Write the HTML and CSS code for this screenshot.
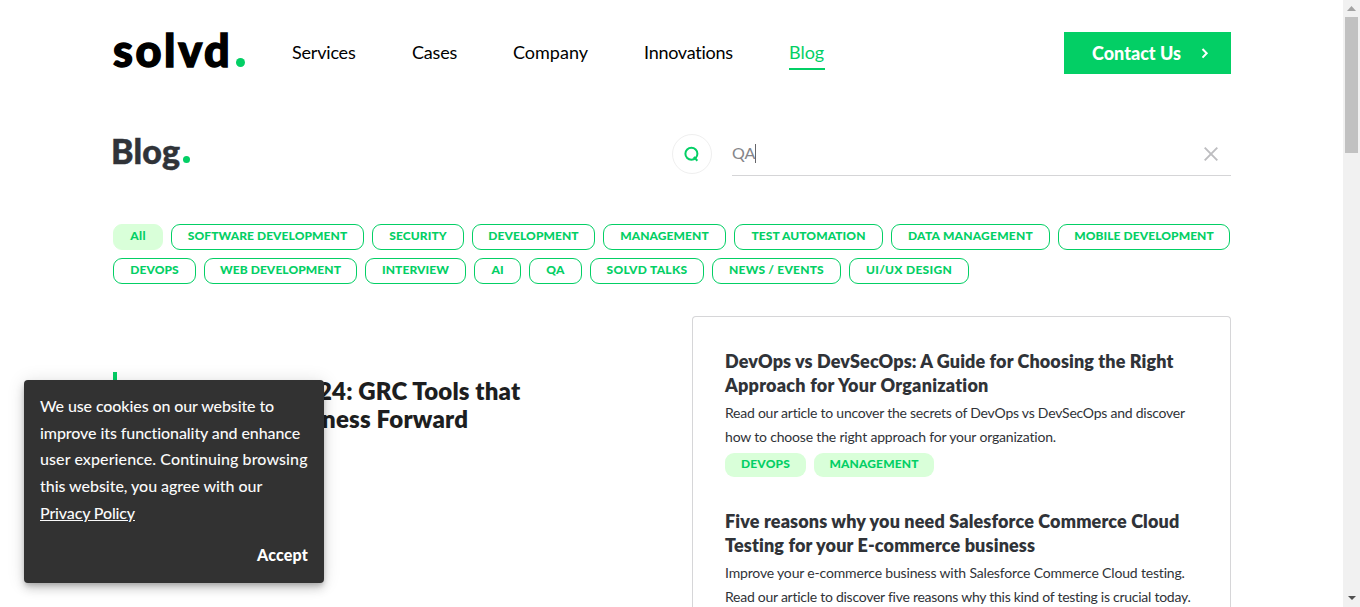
FILE: index.html
```
<!DOCTYPE html>
<html lang="en">
<head>
<meta charset="utf-8">
<title>Blog | Solvd</title>
<link rel="stylesheet" href="styles.css">
</head>
<body>
<div class="page">
  <header class="header">
    <a class="logo"><span>solvd</span><i class="logo-dot"></i></a>
    <nav class="nav">
      <a class="n-services">Services</a>
      <a class="n-cases">Cases</a>
      <a class="n-company">Company</a>
      <a class="n-innovations">Innovations</a>
      <a class="n-blog active">Blog</a>
    </nav>
    <a class="contact">Contact Us
      <svg width="8" height="12" viewBox="0 0 8 12"><path d="M1.5 2 5.7 6.3 1.5 10.6" fill="none" stroke="#fff" stroke-width="2"/></svg>
    </a>
  </header>

  <section class="title-row">
    <h1><span>Blog</span><i class="title-dot"></i></h1>
    <button class="search-btn" aria-label="Search">
      <svg width="16" height="16" viewBox="0 0 16 16" fill="none" stroke="#03cf65" stroke-width="2"><circle cx="7.4" cy="7.7" r="6"/><path d="m9.8 11 3.6 3.7"/></svg>
    </button>
    <div class="search-field">
      <span class="query">QA</span><i class="caret"></i>
      <svg class="clear" width="14" height="14" viewBox="0 0 14 14"><path d="m.7.7 12.6 12.6M13.3.7.7 13.3" stroke="#bdbdc0" stroke-width="1.9"/></svg>
    </div>
  </section>

  <div class="filters">
    <div class="filter-row">
      <a class="pill p-all selected">All</a>
      <a class="pill p-software">SOFTWARE DEVELOPMENT</a>
      <a class="pill p-security">SECURITY</a>
      <a class="pill p-development">DEVELOPMENT</a>
      <a class="pill p-management">MANAGEMENT</a>
      <a class="pill p-test">TEST AUTOMATION</a>
      <a class="pill p-data">DATA MANAGEMENT</a>
      <a class="pill p-mobile">MOBILE DEVELOPMENT</a>
    </div>
    <div class="filter-row">
      <a class="pill p-devops">DEVOPS</a>
      <a class="pill p-web">WEB DEVELOPMENT</a>
      <a class="pill p-interview">INTERVIEW</a>
      <a class="pill p-ai">AI</a>
      <a class="pill p-qa">QA</a>
      <a class="pill p-talks">SOLVD TALKS</a>
      <a class="pill p-news">NEWS / EVENTS</a>
      <a class="pill p-design">UI/UX DESIGN</a>
    </div>
  </div>

  <main class="content">
    <article class="featured">
      <h2><span class="f1">24: GRC Tools that</span><span class="f2">ness Forward</span></h2>
    </article>
    <aside class="list">
      <article class="post">
        <h3><span class="h-a1">DevOps vs DevSecOps: A Guide for Choosing the Right</span><span class="h-a2">Approach for Your Organization</span></h3>
        <p><span class="t-a1">Read our article to uncover the secrets of DevOps vs DevSecOps and discover</span><span class="t-a2">how to choose the right approach for your organization.</span></p>
        <div class="tags"><a class="tag tag-devops">DEVOPS</a><a class="tag tag-management">MANAGEMENT</a></div>
      </article>
      <article class="post">
        <h3><span class="h-b1">Five reasons why you need Salesforce Commerce Cloud</span><span class="h-b2">Testing for your E-commerce business</span></h3>
        <p><span class="t-b1">Improve your e-commerce business with Salesforce Commerce Cloud testing.</span><span class="t-b2">Read our article to discover five reasons why this kind of testing is crucial today.</span></p>
      </article>
    </aside>
  </main>
</div>

<div class="cookie">
  <p><span class="c1">We use cookies on our website to</span><span class="c2">improve its functionality and enhance</span><span class="c3">user experience. Continuing browsing</span><span class="c4">this website, you agree with our</span><a class="c5">Privacy Policy</a></p>
  <button class="accept">Accept</button>
</div>

<div class="scrollbar">
  <svg width="9" height="5" viewBox="0 0 9 5"><path d="M0 5 4.5 0 9 5z" fill="#a3a3a3"/></svg>
  <i class="thumb"></i>
  <svg class="down" width="8" height="4" viewBox="0 0 8 4"><path d="M0 0h8L4 4z" fill="#505050"/></svg>
</div>
</body>
</html>
```
FILE: styles.css
```
* { box-sizing: border-box; }
body {
  margin: 0;
  height: 607px;
  overflow: hidden;
  background: #fff;
  color: #303338;
  font-family: Lato, "Open Sans", sans-serif;
}
button { border: 0; background: none; padding: 0; font-family: inherit; }
svg { display: block; flex: none; }
h1, h2, h3, p { margin: 0; }
.page { width: 1118px; height: 607px; margin-left: 113px; display: flex; flex-direction: column; }

.header { display: flex; flex: none; height: 106px; padding-top: 32px; align-items: flex-start; }
.logo { width: 180px; display: flex; color: #000; font-weight: 900; font-size: 45px; line-height: 42px; letter-spacing: 2.6px; height: 42px; margin-top: -3px; }
.logo span { width: 122px; -webkit-text-stroke: 1.4px #000; }
.logo-dot { width: 9px; height: 9px; border-radius: 50%; background: #03cf65; margin: 29px 0 0 1px; }
.nav { display: flex; flex: 1; color: #000; font-size: 18px; line-height: 36px; white-space: nowrap; }
.nav a { height: 38px; padding-top: 2px; margin-right: 56px; }
.nav .n-services { width: 63px; letter-spacing: -.2px; margin-left: -1px; margin-right: 57px; }
.nav .n-cases { width: 45px; letter-spacing: -.21px; }
.nav .n-company { width: 75px; }
.nav .n-innovations { width: 89px; letter-spacing: -.27px; }
.nav .n-blog { width: 36px; margin-right: 0; }
.nav .active { color: #03cf65; border-bottom: 2px solid #03cf65; }
.contact { display: flex; align-items: center; justify-content: space-between; width: 167px; height: 42px; padding: 0 22px 0 28px; background: #03cf65; color: #fff; font-size: 18px; font-weight: 900; }

.title-row { display: flex; flex: none; height: 118px; }
h1 { display: flex; width: 559px; padding-top: 23px; font-size: 34px; line-height: 44px; font-weight: 900; letter-spacing: .2px; }
h1 span { margin-left: -2px; -webkit-text-stroke: .5px #303338; }
.title-dot { width: 7px; height: 7px; border-radius: 50%; background: #03cf65; margin: 27px 0 0 3px; }
.search-btn { width: 40px; height: 40px; margin-top: 28px; border: 1px solid #efefef; border-radius: 50%; display: flex; align-items: center; justify-content: center; }
.search-field { display: flex; align-items: center; width: 499px; height: 44px; margin: 26px 0 0 20px; border-bottom: 1px solid #d5d5d7; color: #85858a; font-size: 16px; }
.query { padding-bottom: 2px; }
.caret { width: 1px; height: 19px; background: #66666a; }
.clear { margin: 0 13px 0 auto; }

.filters { display: flex; flex: none; flex-direction: column; gap: 8px; }
.filter-row { display: flex; gap: 8px; }
.pill { height: 26px; border: 1px solid #03cf65; border-radius: 9px; color: #03cf65; font-size: 12px; font-weight: 900; line-height: 22px; text-align: center; white-space: nowrap; letter-spacing: .08px; }
.selected { background: #d9ffd9; border-color: #d9ffd9; }
.p-all { width: 50px; letter-spacing: .4px; }
.p-software { width: 193px; }
.p-security { width: 92px; }
.p-development { width: 123px; }
.p-management { width: 123px; }
.p-test { width: 149px; }
.p-data { width: 159px; letter-spacing: .24px; }
.p-mobile { width: 172px; }
.p-devops { width: 83px; }
.p-web { width: 153px; }
.p-interview { width: 101px; }
.p-ai { width: 47px; }
.p-qa { width: 53px; letter-spacing: .4px; }
.p-talks { width: 114px; letter-spacing: .3px; }
.p-news { width: 129px; letter-spacing: .22px; }
.p-design { width: 120px; letter-spacing: .3px; }

.content { display: flex; flex: 1; min-height: 0; justify-content: space-between; padding-top: 32px; }
.content span { display: block; white-space: nowrap; }
.featured { width: 500px; height: 100px; margin-top: 56px; padding: 5px 0 0 205px; border-left: 4px solid #03cf65; color: #1d1e20; }
h2 { font-size: 24px; line-height: 28px; font-weight: 800; }
.f1 { letter-spacing: .15px; margin-left: -4px; }
.f2 { letter-spacing: .2px; }
.list { width: 539px; padding: 32px 32px 0; border: 1px solid #d6d6d8; border-bottom: 0; border-radius: 4px 4px 0 0; }
.post { height: 160px; }
.post:last-child { height: auto; }
h3 { font-size: 18px; line-height: 24px; font-weight: 800; }
.post p { font-size: 14px; line-height: 24px; margin-top: 4px; }
.h-a1 { letter-spacing: .1px; }
.h-a2 { letter-spacing: .23px; }
.h-b1 { letter-spacing: .14px; }
.h-b2 { letter-spacing: .14px; }
.t-a1 { letter-spacing: -.24px; }
.t-a2 { letter-spacing: -.18px; }
.t-b1 { letter-spacing: -.17px; }
.t-b2 { letter-spacing: -.26px; }
.tags { display: flex; gap: 8px; margin-top: 4px; }
.tag { height: 24px; border-radius: 9px; background: #d9ffd9; color: #03cf65; font-size: 12px; font-weight: 900; line-height: 22px; text-align: center; letter-spacing: .14px; }
.tag-devops { width: 81px; }
.tag-management { width: 120px; }

.cookie { position: absolute; left: 24px; top: 380px; width: 300px; height: 203px; padding: 13px 16px; background: #323232; color: #fafafa; border-radius: 4px; box-shadow: 0 3px 5px -1px rgba(0,0,0,.2), 0 6px 10px rgba(0,0,0,.14), 0 1px 18px rgba(0,0,0,.12); }
.cookie p { display: flex; flex-direction: column; align-items: flex-start; font-size: 16px; line-height: 26.7px; font-weight: 500; white-space: nowrap; }
.c1 { letter-spacing: -.1px; }
.c2 { letter-spacing: -.09px; }
.c3 { letter-spacing: .09px; }
.c4 { letter-spacing: -.04px; }
.c5 { letter-spacing: -.15px; text-decoration: underline; }
.accept { display: block; margin: 18px 0 0 auto; color: #fff; font-size: 16px; line-height: 20px; font-weight: 900; letter-spacing: .2px; }

.scrollbar { position: absolute; right: 0; top: 0; width: 17px; height: 607px; background: #f1f1f1; display: flex; flex-direction: column; align-items: center; padding: 6px 0 7px; }
.thumb { width: 13px; height: 136px; margin-top: 6px; background: #c1c1c1; }
.down { margin-top: auto; }
```
